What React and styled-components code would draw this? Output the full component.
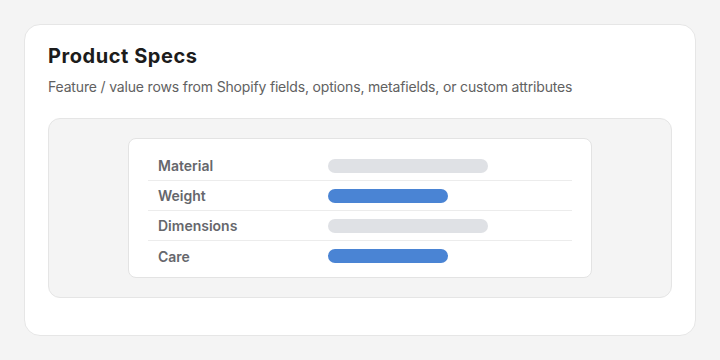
import React from "react";
import styled, { createGlobalStyle } from "styled-components";

const Global = createGlobalStyle`
  html, body { margin: 0; padding: 0; background: #f4f4f4; }
  body { font-family: Inter, "Noto Sans", "Liberation Sans", sans-serif; }
  * { box-sizing: border-box; }
`;

const Page = styled.div`
  width: 720px;
  height: 360px;
  padding: 24px;
  display: flex;
`;

const Card = styled.section`
  flex: 1;
  background: #ffffff;
  border: 1px solid #e6e6e6;
  border-radius: 16px;
  padding: 19px 23px 37px;
  display: flex;
  flex-direction: column;
`;

const Title = styled.h2`
  margin: 0;
  font-size: 20px;
  line-height: 24px;
  font-weight: 700;
  color: #1c1c1c;
  letter-spacing: 0.55px;
`;

const Subtitle = styled.p`
  margin: 9px 0 0;
  font-size: 14px;
  line-height: 20px;
  color: #616161;
  letter-spacing: -0.17px;
`;

const Preview = styled.div`
  margin-top: 21px;
  flex: 1;
  background: #f4f4f4;
  border: 1px solid #e5e5e5;
  border-radius: 12px;
  display: flex;
  align-items: center;
  justify-content: center;
`;

const SpecCard = styled.div`
  width: 464px;
  height: 140px;
  background: #ffffff;
  border: 1px solid #e3e3e3;
  border-radius: 8px;
  padding: 12px 19px 0;
  display: flex;
  flex-direction: column;
`;

const Row = styled.div`
  display: grid;
  grid-template-columns: 170px 1fr;
  align-items: center;
  height: 30px;
  padding: 0 10px;
  border-bottom: ${(p) => (p.$last ? "none" : "1px solid #ececec")};
`;

const Label = styled.span`
  font-size: 14px;
  font-weight: 600;
  color: #66676c;
`;

const Bar = styled.span`
  display: block;
  height: 14px;
  border-radius: 7px;
  width: ${(p) => p.$w}px;
  background: ${(p) => (p.$accent ? "#4a84d4" : "#dfe1e5")};
`;

const rows = [
  { label: "Material", w: 160, accent: false },
  { label: "Weight", w: 120, accent: true },
  { label: "Dimensions", w: 160, accent: false },
  { label: "Care", w: 120, accent: true },
];

export default function App() {
  return (
    <>
      <Global />
      <Page>
        <Card>
          <Title>Product Specs</Title>
          <Subtitle>
            Feature / value rows from Shopify fields, options, metafields, or custom attributes
          </Subtitle>
          <Preview>
            <SpecCard>
              {rows.map((r, i) => (
                <Row key={r.label} $last={i === rows.length - 1}>
                  <Label>{r.label}</Label>
                  <Bar $w={r.w} $accent={r.accent} />
                </Row>
              ))}
            </SpecCard>
          </Preview>
        </Card>
      </Page>
    </>
  );
}
